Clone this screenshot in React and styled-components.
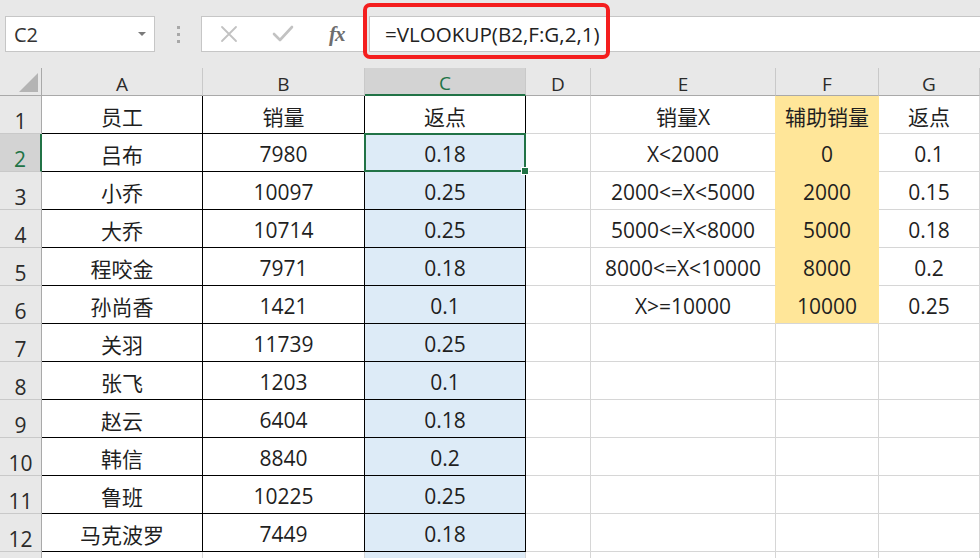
import React from "react";
import styled, { createGlobalStyle } from "styled-components";

const GlobalStyle = createGlobalStyle`
  html, body {
    margin: 0;
    padding: 0;
    background: #ffffff;
    overflow: hidden;
  }
  body {
    font-family: "Open Sans", "Noto Sans CJK SC", sans-serif;
    color: #1f1f1f;
  }
`;

const GREEN = "#217346";
const GRID = "#d6d6d6";
const YELLOW = "#ffe699";
const BLUE = "#ddebf7";

const COLS = ["A", "B", "C", "D", "E", "F", "G"];

const main = [
  ["员工", "销量", "返点"],
  ["吕布", "7980", "0.18"],
  ["小乔", "10097", "0.25"],
  ["大乔", "10714", "0.25"],
  ["程咬金", "7971", "0.18"],
  ["孙尚香", "1421", "0.1"],
  ["关羽", "11739", "0.25"],
  ["张飞", "1203", "0.1"],
  ["赵云", "6404", "0.18"],
  ["韩信", "8840", "0.2"],
  ["鲁班", "10225", "0.25"],
  ["马克波罗", "7449", "0.18"],
];

const lookup = [
  ["销量X", "辅助销量", "返点"],
  ["X<2000", "0", "0.1"],
  ["2000<=X<5000", "2000", "0.15"],
  ["5000<=X<8000", "5000", "0.18"],
  ["8000<=X<10000", "8000", "0.2"],
  ["X>=10000", "10000", "0.25"],
];

const Page = styled.div`
  width: 980px;
  height: 558px;
  overflow: hidden;
  background: #ffffff;
`;

const Toolbar = styled.div`
  height: 68px;
  background: #e8e8e8;
  display: flex;
  align-items: flex-start;
  padding: 16px 0 0 5px;
  box-sizing: border-box;
`;

const NameBox = styled.div`
  width: 150px;
  height: 36px;
  box-sizing: border-box;
  background: #fff;
  border: 1px solid #c6c6c6;
  display: flex;
  align-items: center;
  justify-content: space-between;
  padding: 0 8px 0 8px;
  font-size: 20px;
  color: #333;
`;

const Caret = styled.span`
  width: 0;
  height: 0;
  border-left: 4px solid transparent;
  border-right: 4px solid transparent;
  border-top: 4px solid #7a7a7a;
`;

const Grip = styled.div`
  width: 46px;
  height: 36px;
  display: flex;
  flex-direction: column;
  align-items: center;
  justify-content: center;
  gap: 4px;
  span {
    width: 3px;
    height: 3px;
    background: #a8a8a8;
  }
`;

const IconGroup = styled.div`
  width: 166px;
  height: 36px;
  box-sizing: border-box;
  background: #fff;
  border: 1px solid #c6c6c6;
  border-right: none;
  display: flex;
  align-items: center;
  padding-left: 17px;
  gap: 33px;
`;

const Fx = styled.span`
  font-family: "Liberation Serif", "DejaVu Serif", serif;
  font-style: italic;
  font-weight: bold;
  font-size: 21px;
  color: #6e6e6e;
  margin-left: 2px;
  letter-spacing: -1px;
`;

const FormulaInput = styled.div`
  position: relative;
  flex: 1;
  height: 36px;
  box-sizing: border-box;
  background: #fff;
  border: 1px solid #c6c6c6;
  border-right: none;
  margin-left: 2px;
  display: flex;
  align-items: center;
  padding-left: 15px;
  font-size: 20.6px;
  color: #222;
`;

const Annotation = styled.div`
  position: absolute;
  left: -7px;
  top: -14px;
  width: 247px;
  height: 56px;
  box-sizing: border-box;
  border: 4px solid #f41e1e;
  border-radius: 7px;
  pointer-events: none;
`;

const Sheet = styled.div`
  display: grid;
  grid-template-columns: 42px 161px 162px 161px 65px 185px 103px 101px;
  grid-template-rows: 28px repeat(13, 38px);
`;

const Corner = styled.div`
  background: #e8e8e8;
  border-right: 1px solid #a9a9a9;
  border-bottom: 1px solid #a9a9a9;
  box-sizing: border-box;
  position: relative;
  &::after {
    content: "";
    position: absolute;
    right: 3px;
    bottom: 3px;
    width: 0;
    height: 0;
    border-left: 19px solid transparent;
    border-bottom: 19px solid #b4b4b4;
  }
`;

const ColHeader = styled.div`
  box-sizing: border-box;
  background: ${(p) => (p.$active ? "#d3d3d3" : "#e8e8e8")};
  color: ${(p) => (p.$active ? GREEN : "#2b2b2b")};
  border-right: 1px solid #c9c9c9;
  border-bottom: ${(p) => (p.$active ? `2px solid ${GREEN}` : "1px solid #a9a9a9")};
  display: flex;
  align-items: center;
  justify-content: center;
  padding-top: 4px;
  font-family: "Open Sans", sans-serif;
  font-size: 19px;
`;

const RowHeader = styled.div`
  box-sizing: border-box;
  background: ${(p) => (p.$active ? "#d3d3d3" : "#e8e8e8")};
  color: ${(p) => (p.$active ? GREEN : "#2b2b2b")};
  border-right: ${(p) => (p.$active ? `2px solid ${GREEN}` : "1px solid #a9a9a9")};
  border-bottom: 1px solid #c9c9c9;
  display: flex;
  align-items: flex-end;
  justify-content: center;
  padding-bottom: 1px;
  line-height: 22px;
  font-family: "Open Sans", sans-serif;
  font-size: 21px;
`;

const Cell = styled.div`
  position: relative;
  box-sizing: border-box;
  background: ${(p) => p.$fill || "#fff"};
  border-right: 1px solid ${(p) => p.$right || GRID};
  border-bottom: 1px solid ${(p) => p.$bottom || GRID};
  display: flex;
  align-items: center;
  justify-content: center;
  padding-top: 2px;
  font-size: 21px;
  white-space: nowrap;
  z-index: ${(p) => (p.$selected ? 2 : 0)};
`;

const Selection = styled.div`
  position: absolute;
  left: -1px;
  top: -1px;
  right: -1px;
  bottom: -1px;
  border: 2px solid ${GREEN};
  pointer-events: none;
  &::after {
    content: "";
    position: absolute;
    right: -5px;
    bottom: -5px;
    width: 6px;
    height: 6px;
    background: ${GREEN};
    border: 1px solid #fff;
  }
`;

const CrossIcon = () => (
  <svg width="20" height="20" viewBox="0 0 20 20" fill="none" stroke="#c2c2c2" strokeWidth="1.8" strokeLinecap="round">
    <path d="M3 3 L17 17 M17 3 L3 17" />
  </svg>
);

const CheckIcon = () => (
  <svg width="22" height="20" viewBox="0 0 22 20" fill="none" stroke="#c2c2c2" strokeWidth="2.6" strokeLinejoin="round" strokeLinecap="round">
    <path d="M2 10 L8 16 L20 3" />
  </svg>
);

const cellFor = (row, colIdx) => {
  const col = COLS[colIdx];
  const props = {};
  let text = "";
  if (colIdx <= 2) {
    props.$right = "#000";
    props.$bottom = "#000";
    text = main[row - 1] ? main[row - 1][colIdx] : "";
    if (col === "C" && row >= 2) props.$fill = BLUE;
    if (row === 13) {
      props.$right = GRID;
      props.$bottom = GRID;
      text = "";
    }
  } else if (colIdx >= 4) {
    const r = lookup[row - 1];
    text = r ? r[colIdx - 4] : "";
    if (r && col === "E") props.$right = YELLOW;
    if (r && col === "F") {
      props.$fill = YELLOW;
      props.$right = YELLOW;
      if (row < 6) props.$bottom = YELLOW;
    }
  }
  return { props, text };
};

export default function App() {
  const rows = Array.from({ length: 13 }, (_, i) => i + 1);
  return (
    <Page>
      <GlobalStyle />
      <Toolbar>
        <NameBox>
          C2
          <Caret />
        </NameBox>
        <Grip>
          <span />
          <span />
          <span />
        </Grip>
        <IconGroup>
          <CrossIcon />
          <CheckIcon />
          <Fx>fx</Fx>
        </IconGroup>
        <FormulaInput>
          =VLOOKUP(B2,F:G,2,1)
          <Annotation />
        </FormulaInput>
      </Toolbar>
      <Sheet>
        <Corner />
        {COLS.map((c) => (
          <ColHeader key={c} $active={c === "C"}>
            {c}
          </ColHeader>
        ))}
        {rows.map((r) => (
          <React.Fragment key={r}>
            <RowHeader $active={r === 2}>{r < 13 ? r : ""}</RowHeader>
            {COLS.map((c, ci) => {
              const { props, text } = cellFor(r, ci);
              const selected = r === 2 && c === "C";
              return (
                <Cell key={c} {...props} $selected={selected}>
                  {text}
                  {selected && <Selection />}
                </Cell>
              );
            })}
          </React.Fragment>
        ))}
      </Sheet>
    </Page>
  );
}
